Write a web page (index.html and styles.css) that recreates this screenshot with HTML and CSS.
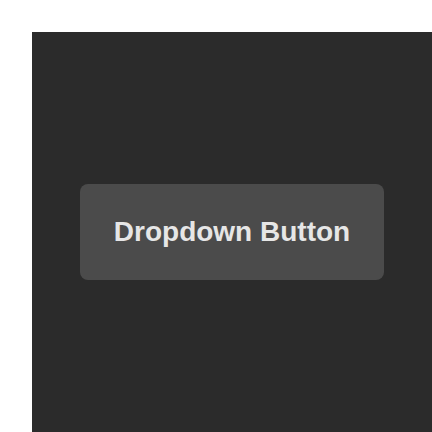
FILE: index.html
```html
<!DOCTYPE html>
<html>
<head>
<meta charset="utf-8">
<link rel="stylesheet" href="styles.css">
</head>
<body>
<div class="stage">
  <button class="dropdown-btn" type="button">Dropdown Button</button>
</div>
</body>
</html>
```
FILE: styles.css
```css
html, body {
  margin: 0;
  padding: 0;
  background: #ffffff;
}
body {
  width: 432px;
  height: 432px;
  padding: 32px 0 0 32px;
  box-sizing: border-box;
}
.stage {
  width: 400px;
  height: 400px;
  background: #2b2b2b;
  display: flex;
  align-items: center;
  justify-content: center;
}
.dropdown-btn {
  width: 304px;
  height: 96px;
  flex: none;
  border: none;
  border-radius: 8px;
  background: #4b4b4b;
  color: #e6e6e6;
  font-family: "Liberation Sans", Arial, sans-serif;
  font-weight: 700;
  font-size: 28px;
  padding: 0;
  display: flex;
  align-items: center;
  justify-content: center;
}
```
